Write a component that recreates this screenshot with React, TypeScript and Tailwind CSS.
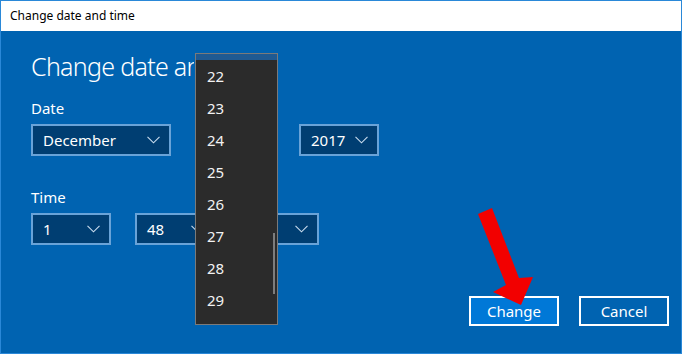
import React from "react";

const font = { fontFamily: '"Noto Sans", "Open Sans", sans-serif' };

function Chevron() {
  return (
    <svg width="13" height="8" viewBox="0 0 13 8" className="shrink-0">
      <polyline points="0.5,0.8 6.5,6.8 12.5,0.8" fill="none" stroke="#c9dcee" strokeWidth="1.1" />
    </svg>
  );
}

function Select({ value, w }: { value: string; w: string }) {
  return (
    <div
      className={`${w} h-[32px] border-2 border-[#69a3d8] bg-[#003e72] flex items-center justify-between pl-[10px] pr-[9px] text-[15px] text-white`}
    >
      <span>{value}</span>
      <Chevron />
    </div>
  );
}

export default function App() {
  const days = ["22", "23", "24", "25", "26", "27", "28", "29"];
  return (
    <div
      className="relative w-[682px] h-[354px] border border-[#2a88d8] bg-[#0063b1] flex flex-col overflow-hidden"
      style={font}
    >
      <div className="h-[30px] bg-white flex items-center pl-[9px] text-[12px] text-black shrink-0">
        Change date and time
      </div>
      <div className="flex flex-col pl-[30px] pr-[12px]">
        <div className="mt-[18px] h-[34px] w-[163px] overflow-hidden leading-[34px] text-[25px] font-light tracking-[-0.7px] text-white whitespace-nowrap">
          Change date and
        </div>
        <div className="mt-[15px] h-[20px] leading-[20px] text-[15px] text-white">Date</div>
        <div className="mt-[6px] flex gap-[24px]">
          <Select value="December" w="w-[140px]" />
          <Select value="" w="w-[80px]" />
          <Select value="2017" w="w-[80px]" />
        </div>
        <div className="mt-[31px] h-[20px] leading-[20px] text-[15px] text-white">Time</div>
        <div className="mt-[6px] flex gap-[24px]">
          <Select value="1" w="w-[80px]" />
          <Select value="48" w="w-[80px]" />
          <Select value="" w="w-[80px]" />
        </div>
        <div className="mt-[51px] flex justify-end gap-[20px]">
          <button className="w-[90px] h-[30px] border-2 border-white bg-[#0078d7] text-white text-[15px] leading-[24px] flex items-center justify-center">
            Change
          </button>
          <button className="w-[90px] h-[30px] border-2 border-white bg-[#0063b1] text-white text-[15px] leading-[24px] flex items-center justify-center">
            Cancel
          </button>
        </div>
      </div>

      {/* dropdown list */}
      <div className="absolute left-[194px] top-[52px] w-[83px] h-[272px] border border-[#7a7a7a] bg-[#2b2b2b] flex flex-col">
        <div className="h-[6px] bg-[#1f5a92] shrink-0" />
        {days.map((d) => (
          <div key={d} className="h-[32px] shrink-0 flex items-center pl-[11px] text-[15px] text-[#f2f2f2]">
            {d}
          </div>
        ))}
        <div className="absolute left-[77px] top-[179px] w-[2px] h-[61px] bg-[#7d7d7d]" />
      </div>

      {/* red arrow */}
      <svg className="absolute left-0 top-0" width="682" height="354" viewBox="0 0 682 354">
        <polygon
          points="477,213 491,207 518,277 532,276 520,304 492,291 505,284"
          fill="#f20000"
        />
      </svg>
    </div>
  );
}
